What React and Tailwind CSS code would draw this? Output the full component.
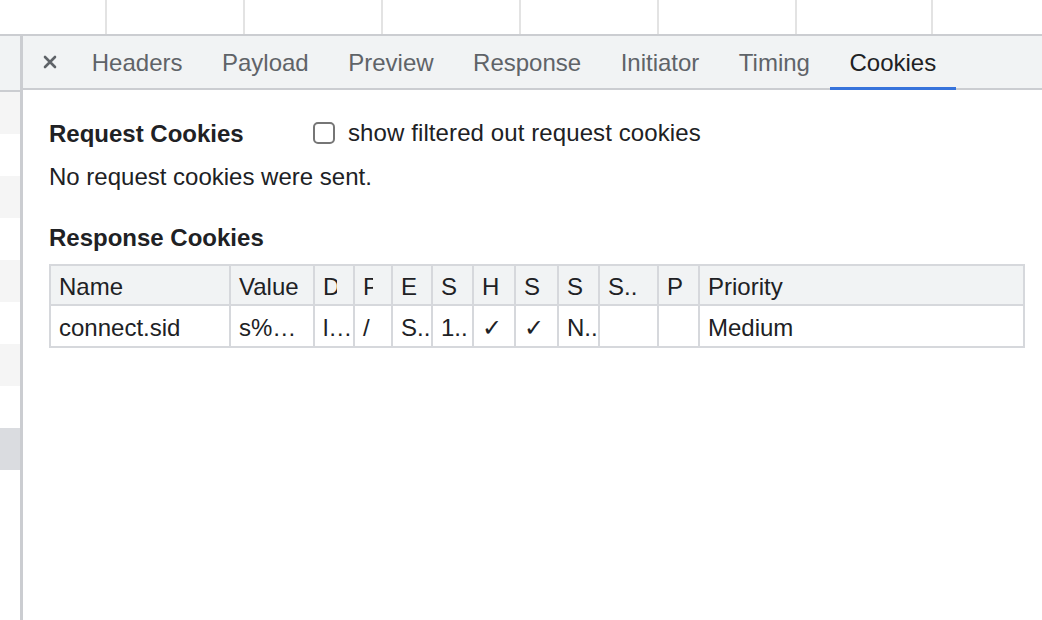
const tabs = ['Headers', 'Payload', 'Preview', 'Response', 'Initiator', 'Timing', 'Cookies']

const cols = 'grid grid-cols-[180px_84px_40px_38px_40px_41px_42px_43px_41px_59px_41px_1fr]'

function Clip({ w, children }) {
  return <span className={`inline-block overflow-hidden whitespace-nowrap align-top ${w}`}>{children}</span>
}

const headCells = [
  'Name',
  'Value',
  <Clip key="d" w="w-[14px]">D</Clip>,
  <Clip key="p" w="w-[10px]">P</Clip>,
  'E',
  'S',
  'H',
  'S',
  'S',
  'S..',
  'P',
  'Priority',
]

const rowCells = ['connect.sid', 's%…', 'l…', '/', 'S..', '1..', '✓', '✓', 'N..', '', '', 'Medium']

export default function App() {
  return (
    <div className="w-[1042px] h-[620px] overflow-hidden bg-white flex flex-col font-['Liberation_Sans',Arial,sans-serif] text-[24px] text-[#202124]">
      {/* network table columns peeking above */}
      <div className="h-[34px] flex shrink-0">
        <div className="w-[107px] border-r-2 border-[#e3e3e3]" />
        <div className="w-[138px] border-r-2 border-[#e3e3e3]" />
        <div className="w-[138px] border-r-2 border-[#e3e3e3]" />
        <div className="w-[138px] border-r-2 border-[#e3e3e3]" />
        <div className="w-[138px] border-r-2 border-[#e3e3e3]" />
        <div className="w-[138px] border-r-2 border-[#e3e3e3]" />
        <div className="w-[136px] border-r-2 border-[#e3e3e3]" />
      </div>
      <div className="h-[2px] bg-[#cbcdd1] shrink-0" />

      <div className="flex flex-1 min-h-0">
        {/* request list strip */}
        <div className="w-[20px] flex flex-col shrink-0">
          <div className="h-[54px] bg-[#f1f3f4] border-b-2 border-[#cbcdd1] box-content" />
          <div className="h-[42px] bg-[#f5f5f5]" />
          <div className="h-[42px]" />
          <div className="h-[42px] bg-[#f5f5f5]" />
          <div className="h-[42px]" />
          <div className="h-[42px] bg-[#f5f5f5]" />
          <div className="h-[42px]" />
          <div className="h-[42px] bg-[#f5f5f5]" />
          <div className="h-[42px]" />
          <div className="h-[42px] bg-[#dadce0]" />
        </div>
        <div className="w-[3px] bg-[#cbcdd1] shrink-0" />

        {/* details panel */}
        <div className="flex-1 flex flex-col min-w-0">
          <div className="h-[54px] bg-[#f1f3f4] border-b-2 border-[#cbcdd1] flex items-stretch shrink-0">
            <div className="flex items-center pl-[20px] pr-[15px]">
              <svg width="14" height="14" viewBox="0 0 14 14">
                <path d="M2 2 L12 12 M12 2 L2 12" stroke="#5f6368" strokeWidth="2.6" strokeLinecap="round" />
              </svg>
            </div>
            {tabs.map((t) => (
              <div
                key={t}
                className={`relative flex items-center px-[19.75px] pt-[2px] ${t === 'Cookies' ? 'text-[#202124]' : 'text-[#5f6368]'}`}
              >
                {t}
                {t === 'Cookies' && <div className="absolute left-0 right-0 -bottom-[2px] h-[3px] bg-[#3773db]" />}
              </div>
            ))}
          </div>

          <div className="pl-[26px] pr-[15px] pt-[30px]">
            <div className="flex items-center h-[28px]">
              <span className="font-bold w-[264px]">Request Cookies</span>
              <span className="w-[22px] h-[22px] rounded-[5px] border-2 border-[#767676] -mt-[3px]" />
              <span className="ml-[13px] -mt-[3px] tracking-[0.1px]">show filtered out request cookies</span>
            </div>
            <div className="h-[28px] mt-[15px] flex items-center">No request cookies were sent.</div>
            <div className="h-[28px] mt-[33px] flex items-center font-bold">Response Cookies</div>

            <div className="mt-[12px] w-[976px] border-y-2 border-r-2 border-[#d6d8dc]">
              <div className={`${cols} bg-[#f1f3f4]`}>
                {headCells.map((c, i) => (
                  <div key={i} className="h-[40px] border-l-2 border-b-2 border-[#d6d8dc] pl-[8px] pt-[3px] flex items-center overflow-hidden whitespace-nowrap">
                    {c}
                  </div>
                ))}
              </div>
              <div className={cols}>
                {rowCells.map((c, i) => (
                  <div key={i} className="h-[40px] border-l-2 border-[#d6d8dc] pl-[8px] pt-[3px] flex items-center overflow-hidden whitespace-nowrap">
                    {c}
                  </div>
                ))}
              </div>
            </div>
          </div>
        </div>
      </div>
    </div>
  )
}
